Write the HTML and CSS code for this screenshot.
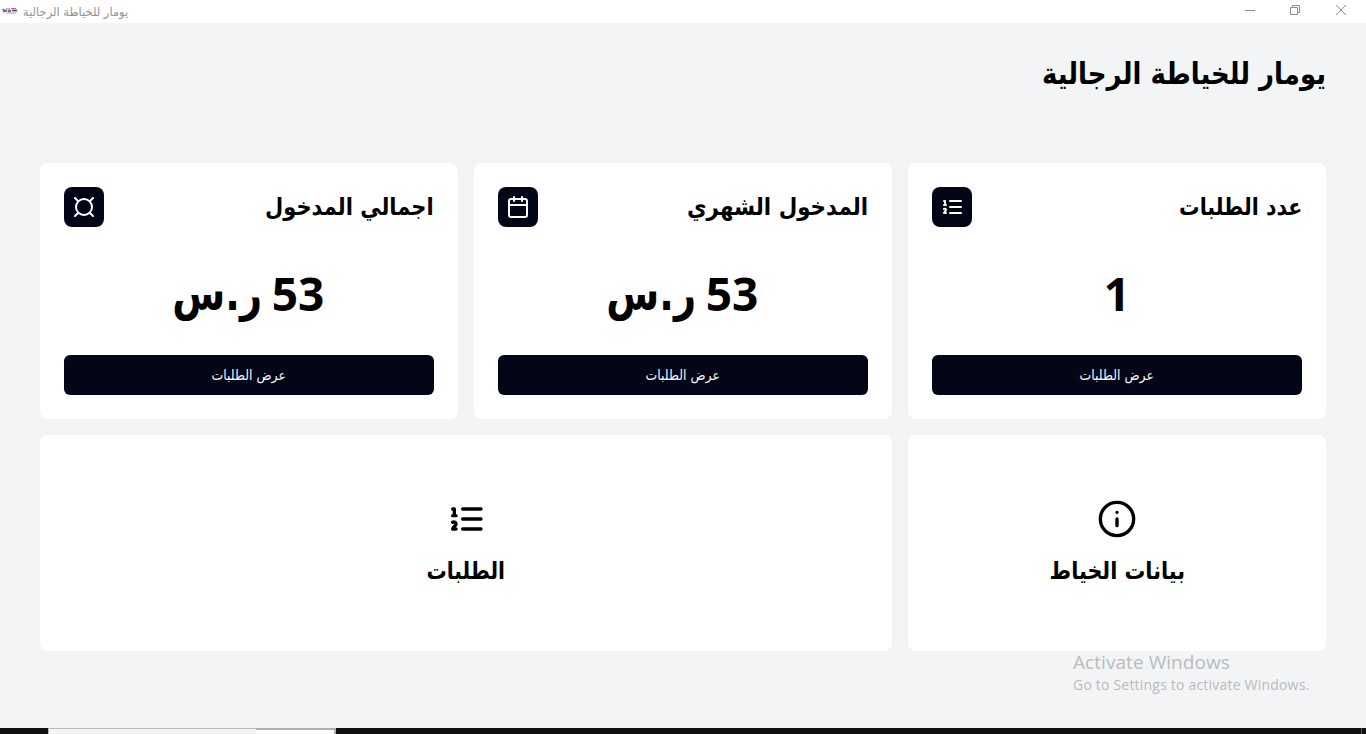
FILE: index.html
```html
<!DOCTYPE html>
<html lang="ar" dir="rtl">
<head>
<meta charset="utf-8">
<title>يومار للخياطة الرجالية</title>
<link rel="stylesheet" href="styles.css">
</head>
<body>
<div class="window">
  <header class="titlebar" dir="ltr">
    <svg class="app-icon" width="16" height="8" viewBox="0 0 16 8"><path d="M0 1h16v6H0z" fill="#f0eef2"/><path d="M0 2.5h3M4 2h4M9 1.5h5" stroke="#d4626c" stroke-width="1.2"/><path d="M1 4h4M6 4h3M10 3.5h5" stroke="#49405c" stroke-width="1.5"/><path d="M5 6h9" stroke="#8baed0"/></svg>
    <span class="app-name" dir="rtl">يومار للخياطة الرجالية</span>
    <div class="controls">
      <svg width="46" height="23" viewBox="0 0 46 23"><path d="M17 10.5h10"/></svg>
      <svg width="46" height="23" viewBox="0 0 46 23"><path d="M16.500 7.500h7v7h-7zM18.500 7.500v-2h7v7h-2"/></svg>
      <svg width="46" height="23" viewBox="0 0 46 23"><path d="M16 5l10 10M26 5L16 15"/></svg>
    </div>
  </header>

  <main class="page">
    <h1 class="page-title"><span>يومار للخياطة الرجالية</span></h1>
    <div class="grid">
      <section class="card">
        <div class="card-head">
          <h2 class="label t-orders">عدد الطلبات</h2>
          <div class="badge"><svg class="icon" viewBox="0 0 24 24"><path d="M10 6h11M10 12h11M10 18h11M4 6h1v4M4 10h2M6 18H4c0-1 2-2 2-3s-1-1.500-2-1"/></svg></div>
        </div>
        <div class="value">1</div>
        <button class="button"><span>عرض الطلبات</span></button>
      </section>
      <section class="card">
        <div class="card-head">
          <h2 class="label t-month">المدخول الشهري</h2>
          <div class="badge"><svg class="icon" viewBox="0 0 24 24"><rect x="3" y="4" width="18" height="18" rx="2"/><path d="M16 2v4M8 2v4M3 10h18"/></svg></div>
        </div>
        <div class="value"><span>53</span> <span class="currency">ر.س</span></div>
        <button class="button"><span>عرض الطلبات</span></button>
      </section>
      <section class="card">
        <div class="card-head">
          <h2 class="label t-total">اجمالي المدخول</h2>
          <div class="badge"><svg class="icon" viewBox="0 0 24 24"><circle cx="12" cy="12" r="8"/><path d="M3 3l3 3M21 3l-3 3M3 21l3-3M21 21l-3-3"/></svg></div>
        </div>
        <div class="value"><span>53</span> <span class="currency">ر.س</span></div>
        <button class="button"><span>عرض الطلبات</span></button>
      </section>
      <section class="card link">
        <svg class="icon large" viewBox="0 0 24 24"><circle cx="12" cy="12" r="10"/><path d="M12 16v-4M12 8h.01"/></svg>
        <h2 class="label t-info">بيانات الخياط</h2>
      </section>
      <section class="card link wide">
        <svg class="icon large" viewBox="0 0 24 24"><path d="M10 6h11M10 12h11M10 18h11M4 6h1v4M4 10h2M6 18H4c0-1 2-2 2-3s-1-1.500-2-1"/></svg>
        <h2 class="label t-list">الطلبات</h2>
      </section>
    </div>
  </main>
  <footer class="taskbar" dir="ltr"><div class="search"></div><div class="task"></div><div class="desktop"></div></footer>
  <div class="watermark" dir="ltr"><div class="wm-title">Activate Windows</div><div class="wm-text">Go to Settings to activate Windows.</div></div>
</div>
</body>
</html>
```
FILE: styles.css
```css
* { box-sizing: border-box; }
body { margin: 0; font-family: "DejaVu Sans", sans-serif; color: #000; overflow: hidden; }
h1, h2 { margin: 0; }
.window { position: relative; height: 734px; display: flex; flex-direction: column; background: #f3f4f6; }
.titlebar { height: 23px; flex: none; display: flex; align-items: center; background: #fff; padding-left: 2px; }
.app-icon { margin-right: 5px; margin-bottom: 2px; }
.app-name { font-size: 12px; line-height: 23px; color: #929292; white-space: nowrap; padding-top: 1px; transform: scaleX(.955); transform-origin: left center; }
.controls { margin-left: auto; display: flex; }
.controls svg { fill: none; stroke: #8f8f8f; stroke-width: 1; }
.page { flex: 1; padding: 33px 40px 0; }
.page-title { font-size: 30px; line-height: 36px; height: 36px; margin-bottom: 71px; white-space: nowrap; }
.page-title span { display: inline-block; transform: scale(.866, 1); transform-origin: right center; }
.grid { display: grid; grid-template-columns: repeat(3, 418px); grid-template-rows: 256px 216px; gap: 16px; }
.card { background: #fff; border-radius: 8px; padding: 24px; display: flex; flex-direction: column; }
.card-head { display: flex; justify-content: space-between; align-items: center; height: 40px; }
.label { font-size: 24px; line-height: 32px; font-weight: 700; white-space: nowrap; transform-origin: right center; }
.t-orders { transform: scaleX(.854); }
.t-month { transform: scaleX(.892); }
.t-total { transform: scaleX(.875); }
.badge { width: 40px; height: 40px; border-radius: 8px; background: #020617; color: #fff; display: grid; place-items: center; }
.icon { width: 24px; height: 24px; fill: none; stroke: currentColor; stroke-width: 2; stroke-linecap: round; stroke-linejoin: round; }
.icon.large { width: 40px; height: 40px; }
.value { height: 128px; padding-top: 3px; display: flex; justify-content: center; align-items: center; gap: 10px; font: 700 46px/48px "Noto Sans", "DejaVu Sans", sans-serif; }
.currency { width: 88px; font-family: "DejaVu Sans", sans-serif; font-size: 48px; white-space: nowrap; transform: scaleX(.8); transform-origin: right center; }
.button { height: 40px; border: 0; border-radius: 6px; background: #020617; color: #f8fafc; font: 14px/20px "DejaVu Sans", sans-serif; padding: 0; }
.button span { display: inline-block; transform: scaleX(.89); }
.link { align-items: center; justify-content: center; gap: 16px; }
.link .label { transform-origin: center; }
.t-info { transform: scaleX(.865); }
.t-list { transform: scaleX(.84); }
.wide { grid-column: span 2; }
.taskbar { height: 6px; flex: none; display: flex; background: #101010; padding-left: 48px; }
.search { width: 208px; background: #f3f3f3; border-top: 1px solid #b8b8b8; border-left: 1px solid #b8b8b8; }
.task { width: 80px; background: #fff; border-top: 2px solid #aeb0ac; border-right: 2px solid #aeb0ac; }
.desktop { margin-left: auto; width: 5px; border-left: 1px solid #555; }
.watermark { position: absolute; left: 1073px; top: 650px; color: #b9bbbd; font-family: "Open Sans", sans-serif; white-space: nowrap; }
.wm-title { font-size: 19px; line-height: 24px; letter-spacing: .06px; }
.wm-text { font-size: 14px; line-height: 21px; letter-spacing: .2px; }
```
